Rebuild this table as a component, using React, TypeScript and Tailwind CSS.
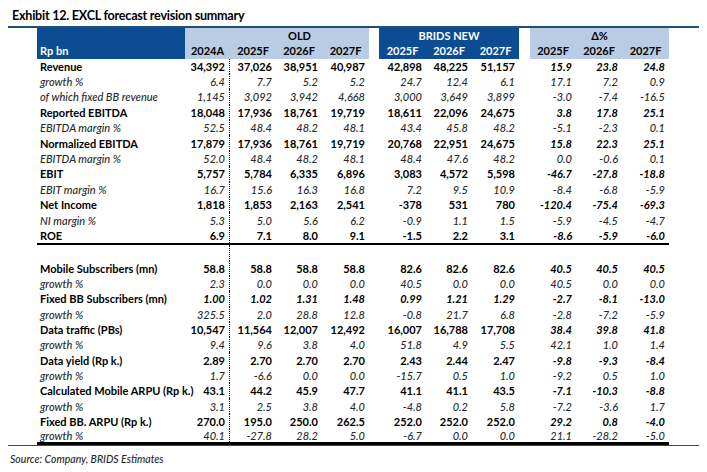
import React from "react";

type Row = {
  label: string;
  v: string[];
  kind: "b" | "i" | "bi";
};

const sec1: Row[] = [
  { label: "Revenue", kind: "b", v: ["34,392", "37,026", "38,951", "40,987", "42,898", "48,225", "51,157", "15.9", "23.8", "24.8"] },
  { label: "growth %", kind: "i", v: ["6.4", "7.7", "5.2", "5.2", "24.7", "12.4", "6.1", "17.1", "7.2", "0.9"] },
  { label: "of which fixed BB revenue", kind: "i", v: ["1,145", "3,092", "3,942", "4,668", "3,000", "3,649", "3,899", "-3.0", "-7.4", "-16.5"] },
  { label: "Reported EBITDA", kind: "b", v: ["18,048", "17,936", "18,761", "19,719", "18,611", "22,096", "24,675", "3.8", "17.8", "25.1"] },
  { label: "EBITDA margin %", kind: "i", v: ["52.5", "48.4", "48.2", "48.1", "43.4", "45.8", "48.2", "-5.1", "-2.3", "0.1"] },
  { label: "Normalized EBITDA", kind: "b", v: ["17,879", "17,936", "18,761", "19,719", "20,768", "22,951", "24,675", "15.8", "22.3", "25.1"] },
  { label: "EBITDA margin %", kind: "i", v: ["52.0", "48.4", "48.2", "48.1", "48.4", "47.6", "48.2", "0.0", "-0.6", "0.1"] },
  { label: "EBIT", kind: "b", v: ["5,757", "5,784", "6,335", "6,896", "3,083", "4,572", "5,598", "-46.7", "-27.8", "-18.8"] },
  { label: "EBIT margin %", kind: "i", v: ["16.7", "15.6", "16.3", "16.8", "7.2", "9.5", "10.9", "-8.4", "-6.8", "-5.9"] },
  { label: "Net Income", kind: "b", v: ["1,818", "1,853", "2,163", "2,541", "-378", "531", "780", "-120.4", "-75.4", "-69.3"] },
  { label: "NI margin %", kind: "i", v: ["5.3", "5.0", "5.6", "6.2", "-0.9", "1.1", "1.5", "-5.9", "-4.5", "-4.7"] },
  { label: "ROE", kind: "b", v: ["6.9", "7.1", "8.0", "9.1", "-1.5", "2.2", "3.1", "-8.6", "-5.9", "-6.0"] },
];

const sec2: Row[] = [
  { label: "Mobile Subscribers (mn)", kind: "b", v: ["58.8", "58.8", "58.8", "58.8", "82.6", "82.6", "82.6", "40.5", "40.5", "40.5"] },
  { label: "growth %", kind: "i", v: ["2.3", "0.0", "0.0", "0.0", "40.5", "0.0", "0.0", "40.5", "0.0", "0.0"] },
  { label: "Fixed BB Subscribers (mn)", kind: "bi", v: ["1.00", "1.02", "1.31", "1.48", "0.99", "1.21", "1.29", "-2.7", "-8.1", "-13.0"] },
  { label: "growth %", kind: "i", v: ["325.5", "2.0", "28.8", "12.8", "-0.8", "21.7", "6.8", "-2.8", "-7.2", "-5.9"] },
  { label: "Data traffic (PBs)", kind: "b", v: ["10,547", "11,564", "12,007", "12,492", "16,007", "16,788", "17,708", "38.4", "39.8", "41.8"] },
  { label: "growth %", kind: "i", v: ["9.4", "9.6", "3.8", "4.0", "51.8", "4.9", "5.5", "42.1", "1.0", "1.4"] },
  { label: "Data yield (Rp k.)", kind: "b", v: ["2.89", "2.70", "2.70", "2.70", "2.43", "2.44", "2.47", "-9.8", "-9.3", "-8.4"] },
  { label: "growth %", kind: "i", v: ["1.7", "-6.6", "0.0", "0.0", "-15.7", "0.5", "1.0", "-9.2", "0.5", "1.0"] },
  { label: "Calculated Mobile ARPU (Rp k.)", kind: "b", v: ["43.1", "44.2", "45.9", "47.7", "41.1", "41.1", "43.5", "-7.1", "-10.3", "-8.8"] },
  { label: "growth %", kind: "i", v: ["3.1", "2.5", "3.8", "4.0", "-4.8", "0.2", "5.8", "-7.2", "-3.6", "1.7"] },
  { label: "Fixed BB. ARPU (Rp k.)", kind: "b", v: ["270.0", "195.0", "250.0", "262.5", "252.0", "252.0", "252.0", "29.2", "0.8", "-4.0"] },
  { label: "growth %", kind: "i", v: ["40.1", "-27.8", "28.2", "5.0", "-6.7", "0.0", "0.0", "21.1", "-28.2", "-5.0"] },
];

const GRID =
  "grid grid-cols-[148px_45px_46px_46px_47px_10px_47px_46px_47px_11px_46px_46px_47px]";

function DataRow({ r, extra, h }: { r: Row; extra?: string; h: string }) {
  const isB = r.kind === "b" || r.kind === "bi";
  const labelCls = isB ? "font-bold text-black" : "italic font-medium text-[#2a2a2a]";
  const numCls = (idx: number) => {
    if (r.kind === "bi") return "font-bold italic text-black";
    if (r.kind === "b") return idx >= 7 ? "font-bold italic text-black" : "font-bold text-black";
    return "italic font-medium text-[#2a2a2a]";
  };
  const cells: React.ReactNode[] = [];
  r.v.forEach((val, idx) => {
    if (idx === 4 || idx === 7) cells.push(<div key={"g" + idx} />);
    cells.push(
      <div
        key={idx}
        className={
          "text-right pr-[4px] whitespace-nowrap h-full flex items-center justify-end " +
          numCls(idx) +
          (idx === 0 ? " border-r border-dotted border-black" : "")
        }
      >
        {val}
      </div>
    );
  });
  return (
    <div className={GRID + " items-center " + h + " " + (extra ?? "")}>
      <div className={"pl-[3px] whitespace-nowrap " + labelCls}>{r.label}</div>
      {cells}
    </div>
  );
}

export default function App() {
  return (
    <div
      className="w-[707px] h-[472px] bg-white relative overflow-hidden text-[11px] leading-none"
      style={{ fontFamily: "Lato, 'Liberation Sans', sans-serif" }}
    >
      <div className="h-[26px] pl-[12px] pt-[10px] font-bold text-[12.6px] text-black leading-none tracking-[-0.25px]">
        Exhibit 12. EXCL forecast revision summary
      </div>
      <div className="mx-[8px] h-[1.5px] bg-[#1f4e79]" />
      <div className="ml-[37px] w-[632px]">
        {/* header */}
        <div className={GRID + " grid-rows-[15.5px_15.5px] font-bold"}>
          <div className="col-start-1 row-start-1 row-span-2 bg-[#0b4c93] text-white flex items-end pl-[3px] pb-[3px]">
            Rp bn
          </div>
          <div className="col-start-2 row-start-1 bg-[#b8cce4]" />
          <div className="col-start-3 col-span-3 row-start-1 bg-[#b8cce4] flex items-center justify-center text-black">
            OLD
          </div>
          <div className="col-start-7 col-span-3 row-start-1 bg-[#0b4c93] flex items-center justify-center text-white">
            BRIDS NEW
          </div>
          <div className="col-start-11 col-span-3 row-start-1 bg-[#b8cce4] flex items-center justify-center text-black">
            Δ%
          </div>
          <div className="col-start-2 row-start-2 bg-[#b8cce4] flex items-center justify-center text-black">2024A</div>
          <div className="col-start-3 row-start-2 bg-[#b8cce4] flex items-center justify-center text-black">2025F</div>
          <div className="col-start-4 row-start-2 bg-[#b8cce4] flex items-center justify-center text-black">2026F</div>
          <div className="col-start-5 row-start-2 bg-[#b8cce4] flex items-center justify-center text-black">2027F</div>
          <div className="col-start-7 row-start-2 bg-[#0b4c93] flex items-center justify-center text-white">2025F</div>
          <div className="col-start-8 row-start-2 bg-[#0b4c93] flex items-center justify-center text-white">2026F</div>
          <div className="col-start-9 row-start-2 bg-[#0b4c93] flex items-center justify-center text-white">2027F</div>
          <div className="col-start-11 row-start-2 bg-[#b8cce4] flex items-center justify-center text-black">2025F</div>
          <div className="col-start-12 row-start-2 bg-[#b8cce4] flex items-center justify-center text-black">2026F</div>
          <div className="col-start-13 row-start-2 bg-[#b8cce4] flex items-center justify-center text-black">2027F</div>
        </div>
        {/* section 1 */}
        {sec1.map((r, i) => (
          <DataRow
            key={"a" + i}
            r={r}
            h={i === sec1.length - 1 ? "h-[17.4px]" : "h-[15.4px]"}
            extra={i === sec1.length - 1 ? "border-b-2 border-black" : ""}
          />
        ))}
        {/* spacer */}
        <div className={GRID + " h-[15.5px]"}>
          <div />
          <div className="border-r border-dotted border-black" />
        </div>
        {/* section 2 */}
        {sec2.map((r, i) => (
          <DataRow
            key={"b" + i}
            r={r}
            h={i === sec2.length - 1 ? "h-[16px]" : "h-[15.3px]"}
            extra={i === sec2.length - 1 ? "border-b-[3px] border-black" : ""}
          />
        ))}
      </div>
      <div className="mx-[8px] h-[1px] bg-[#1f4e79]" />
      <div className="pl-[10px] pt-[8px] italic font-medium text-[10.5px] text-[#2a2a2a]">
        Source: Company, BRIDS Estimates
      </div>
    </div>
  );
}
